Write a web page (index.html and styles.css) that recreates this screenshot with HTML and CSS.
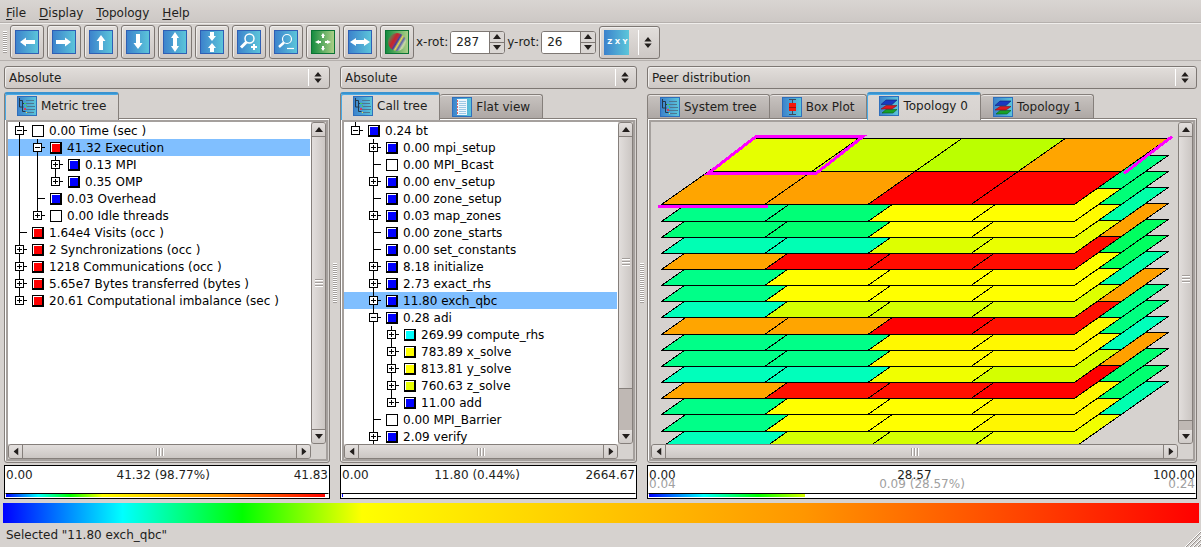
FILE: index.html
```html
<!DOCTYPE html>
<html lang="en">
<head>
	<meta charset="UTF-8">
	<title>Cube</title>
	<link rel="stylesheet" href="styles.css">
</head>
<body>

	<svg class="defs" aria-hidden="true">
		<defs>
			<linearGradient id="blue"><stop offset="0" stop-color="#3c82cc"/><stop offset="1" stop-color="#5cc6da"/></linearGradient>
			<linearGradient id="green"><stop offset="0" stop-color="#128a3e"/><stop offset="1" stop-color="#aed088"/></linearGradient>
			<linearGradient id="ball" x1="0" y1="0.2" x2="1" y2="0.8">
				<stop offset="0" stop-color="#3c9a50"/><stop offset="0.15" stop-color="#7a6a4c"/><stop offset="0.32" stop-color="#c8242c"/>
				<stop offset="0.42" stop-color="#b83040"/><stop offset="0.5" stop-color="#3d3da8"/><stop offset="0.6" stop-color="#e8dc4c"/>
				<stop offset="0.7" stop-color="#5a62a8"/><stop offset="0.82" stop-color="#c8d8a8"/><stop offset="1" stop-color="#90c070"/>
			</linearGradient>
		</defs>
		<symbol id="bg-blue" viewBox="0 0 24 24"><rect x="0.5" y="0.5" width="23" height="23" fill="url(#blue)" stroke="#2f5fb4"/></symbol>
		<symbol id="bg-green" viewBox="0 0 24 24"><rect x="0.5" y="0.5" width="23" height="23" fill="url(#green)" stroke="#0b7434"/></symbol>
		<symbol id="left" viewBox="0 0 24 24"><path d="M5 12l6-4.500v2.500h9v4h-9v2.500z" fill="#fff"/></symbol>
		<symbol id="updown" viewBox="0 0 24 24"><path d="M12 2l4 6h-2v8h2l-4 6-4-6h2V8H8z" fill="#fff"/></symbol>
		<symbol id="tree" viewBox="0 0 20 20">
			<rect x="0.500" y="0.500" width="19" height="19" fill="url(#blue)" stroke="#2f6fbc"/>
			<path d="M2.500 2v9h4M2.500 4.500h3v11h3M5.500 7.500h2" fill="none" stroke="#24384c"/>
			<path d="M9 4.500h8M8 7.500h9M9 10.500h9M8 13.500h10M10 16.500h7" stroke="#4d7791"/>
			<path d="M7 7h2v1H7zM9 9h1v2H9z" fill="#3cd060"/><path d="M7 12h2v2H7z" fill="#d04060"/><path d="M9 16h1v1H9z" fill="#f0e040"/>
		</symbol>
		<symbol id="flat" viewBox="0 0 20 20">
			<rect x="0.500" y="0.500" width="19" height="19" fill="url(#blue)" stroke="#2f6fbc"/>
			<rect x="5" y="2" width="10" height="16" fill="#eef6fc"/>
			<path d="M7 4.500h7M7 6.500h7M7 8.500h7M7 10.500h7M7 12.500h7M7 14.500h7M7 16.500h7" stroke="#9cc8e4"/>
			<path d="M5.500 3v14" stroke="#e06868" stroke-dasharray="2 1"/>
		</symbol>
		<symbol id="box" viewBox="0 0 20 20">
			<rect x="0.500" y="0.500" width="19" height="19" fill="url(#blue)" stroke="#2f6fbc"/>
			<path d="M7 2.500h7M10.500 2v16M7 17.500h7" stroke="#3c4c5c"/>
			<rect x="7" y="6" width="7" height="8" fill="#f41808"/><path d="M7 10.500h7" stroke="#a01008"/>
		</symbol>
		<symbol id="planes" viewBox="0 0 20 20">
			<rect x="0.500" y="0.500" width="19" height="19" fill="url(#blue)" stroke="#2f6fbc"/>
			<path d="M3 17l4-3.500h11L14 17z" fill="#18a028" stroke="#0c6018" stroke-width="0.600"/>
			<path d="M2 13l5-3.500h11L13 13z" fill="#dc1820" stroke="#801018" stroke-width="0.600"/>
			<path d="M2 8.500L7 4h11l-5 4.500z" fill="#1838c0" stroke="#102070" stroke-width="0.600"/>
		</symbol>
		<symbol id="tri-up" viewBox="0 0 8 5"><path d="M0 5l4-5 4 5z"/></symbol>
	</svg>

	<nav class="menubar">
		<a href="#"><u>F</u>ile</a>
		<a href="#"><u>D</u>isplay</a>
		<a href="#"><u>T</u>opology</a>
		<a href="#"><u>H</u>elp</a>
	</nav>

	<div class="toolbar">
		<span class="grip"></span>
		<button class="tool" aria-label="Left"><svg viewBox="0 0 24 24"><use href="#bg-blue"/><use href="#left"/></svg></button>
		<button class="tool" aria-label="Right"><svg viewBox="0 0 24 24"><use href="#bg-blue"/><use href="#left" transform="rotate(180 12 12)"/></svg></button>
		<button class="tool" aria-label="Up"><svg viewBox="0 0 24 24"><use href="#bg-blue"/><use href="#left" transform="rotate(90 12 12)"/></svg></button>
		<button class="tool" aria-label="Down"><svg viewBox="0 0 24 24"><use href="#bg-blue"/><use href="#left" transform="rotate(-90 12 12)"/></svg></button>
		<button class="tool" aria-label="Stretch"><svg viewBox="0 0 24 24"><use href="#bg-blue"/><use href="#updown"/></svg></button>
		<button class="tool" aria-label="Squeeze"><svg viewBox="0 0 24 24"><use href="#bg-blue"/><path d="M10 2h4v4h2l-4 5-4-5h2zM12 13l4 5h-2v4h-4v-4H8z" fill="#fff"/></svg></button>
		<button class="tool" aria-label="Zoom in"><svg viewBox="0 0 24 24"><use href="#bg-blue"/><circle cx="12.500" cy="8.500" r="4.500" fill="none" stroke="#fff" stroke-width="1.500"/><path d="M9.500 12L4 17.500" stroke="#fff" stroke-width="3"/><path d="M17 14v6M14 17h6" stroke="#fff" stroke-width="2"/></svg></button>
		<button class="tool" aria-label="Zoom out"><svg viewBox="0 0 24 24"><use href="#bg-blue"/><circle cx="13" cy="9" r="4.500" fill="none" stroke="#fff" stroke-width="1.200"/><path d="M10 12.500L5 17" stroke="#fff" stroke-width="2.500"/><path d="M13 18.500h7" stroke="#fff" stroke-width="1.200"/></svg></button>
		<button class="tool" aria-label="Reset"><svg viewBox="0 0 24 24"><use href="#bg-green"/><path d="M12 3l2 3h-1v2h-2V6h-1zM12 21l2-3h-1v-2h-2v2h-1zM4 12l4-2v1h2v2H8v1zM20 12l-4-2v1h-2v2h2v1z" fill="#fff"/></svg></button>
		<button class="tool" aria-label="Fit"><svg viewBox="0 0 24 24"><use href="#bg-blue"/><use href="#updown" transform="rotate(90 12 12)"/></svg></button>
		<button class="tool" aria-label="Colors"><svg viewBox="0 0 24 24"><use href="#bg-green"/><circle cx="12" cy="12" r="9" fill="url(#ball)"/></svg></button>
		<label for="xrot">x-rot:</label>
		<span class="spin">
			<input id="xrot" type="text" value="287">
			<span class="steps">
				<button aria-label="Increase"><svg viewBox="0 0 8 5"><use href="#tri-up"/></svg></button>
				<button aria-label="Decrease"><svg class="flip" viewBox="0 0 8 5"><use href="#tri-up"/></svg></button>
			</span>
		</span>
		<label for="yrot">y-rot:</label>
		<span class="spin">
			<input id="yrot" type="text" value="26">
			<span class="steps">
				<button aria-label="Increase"><svg viewBox="0 0 8 5"><use href="#tri-up"/></svg></button>
				<button aria-label="Decrease"><svg class="flip" viewBox="0 0 8 5"><use href="#tri-up"/></svg></button>
			</span>
		</span>
		<div class="combo axis">
			<select aria-label="Axis order"><option>Z X Y</option></select>
			<svg viewBox="0 0 8 12"><path d="M0 5l4-5 4 5zM0 7h8l-4 5z"/></svg>
		</div>
	</div>

	<main class="panels">
		<section class="panel">
			<div class="combo">
				<select aria-label="Metric values"><option>Absolute</option></select>
				<svg viewBox="0 0 8 12"><path d="M0 5l4-5 4 5zM0 7h8l-4 5z"/></svg>
			</div>
			<div class="tabs">
				<button class="tab active"><svg viewBox="0 0 20 20"><use href="#tree"/></svg>Metric tree</button>
			</div>
			<div class="pane">
				<div class="view">
					<ul class="tree">
						<li><div class="row"><button class="toggle open" aria-label="Collapse"></button><i class="mark none"></i>0.00 Time (sec )</div>
							<ul>
								<li><div class="row selected"><button class="toggle open" aria-label="Collapse"></button><i class="mark red"></i>41.32 Execution</div>
									<ul>
										<li><div class="row"><button class="toggle" aria-label="Expand"></button><i class="mark blue"></i>0.13 MPI</div></li>
										<li><div class="row"><button class="toggle" aria-label="Expand"></button><i class="mark blue"></i>0.35 OMP</div></li>
									</ul>
								</li>
								<li><div class="row"><i class="mark blue"></i>0.03 Overhead</div></li>
								<li><div class="row"><button class="toggle" aria-label="Expand"></button><i class="mark none"></i>0.00 Idle threads</div></li>
							</ul>
						</li>
						<li><div class="row"><i class="mark red"></i>1.64e4 Visits (occ )</div></li>
						<li><div class="row"><button class="toggle" aria-label="Expand"></button><i class="mark red"></i>2 Synchronizations (occ )</div></li>
						<li><div class="row"><button class="toggle" aria-label="Expand"></button><i class="mark red"></i>1218 Communications (occ )</div></li>
						<li><div class="row"><button class="toggle" aria-label="Expand"></button><i class="mark red"></i>5.65e7 Bytes transferred (bytes )</div></li>
						<li><div class="row"><button class="toggle" aria-label="Expand"></button><i class="mark red"></i>20.61 Computational imbalance (sec )</div></li>
					</ul>
				</div>
				<div class="vbar">
					<button aria-label="Scroll up"><svg viewBox="0 0 8 5"><use href="#tri-up"/></svg></button>
					<div class="track"><div class="thumb"></div></div>
					<button aria-label="Scroll down"><svg class="flip" viewBox="0 0 8 5"><use href="#tri-up"/></svg></button>
				</div>
				<div class="hbar">
					<button aria-label="Scroll left"><svg class="west" viewBox="0 0 8 5"><use href="#tri-up"/></svg></button>
					<div class="track"><div class="thumb"></div></div>
					<button aria-label="Scroll right"><svg class="east" viewBox="0 0 8 5"><use href="#tri-up"/></svg></button>
				</div>
			</div>
			<div class="values">
				<div class="nums"><span>0.00</span><span>41.32 (98.77%)</span><span>41.83</span></div>
				<div class="level"><div class="rest" style="width: 1%"></div></div>
			</div>
		</section>

		<div class="splitter"></div>

		<section class="panel">
			<div class="combo">
				<select aria-label="Call values"><option>Absolute</option></select>
				<svg viewBox="0 0 8 12"><path d="M0 5l4-5 4 5zM0 7h8l-4 5z"/></svg>
			</div>
			<div class="tabs">
				<button class="tab active"><svg viewBox="0 0 20 20"><use href="#tree"/></svg>Call tree</button>
				<button class="tab"><svg viewBox="0 0 20 20"><use href="#flat"/></svg>Flat view</button>
			</div>
			<div class="pane">
				<div class="view">
					<ul class="tree">
						<li><div class="row"><button class="toggle open" aria-label="Collapse"></button><i class="mark blue"></i>0.24 bt</div>
							<ul>
								<li><div class="row"><button class="toggle" aria-label="Expand"></button><i class="mark blue"></i>0.00 mpi_setup</div></li>
								<li><div class="row"><i class="mark none"></i>0.00 MPI_Bcast</div></li>
								<li><div class="row"><button class="toggle" aria-label="Expand"></button><i class="mark blue"></i>0.00 env_setup</div></li>
								<li><div class="row"><i class="mark blue"></i>0.00 zone_setup</div></li>
								<li><div class="row"><button class="toggle" aria-label="Expand"></button><i class="mark blue"></i>0.03 map_zones</div></li>
								<li><div class="row"><i class="mark blue"></i>0.00 zone_starts</div></li>
								<li><div class="row"><i class="mark blue"></i>0.00 set_constants</div></li>
								<li><div class="row"><button class="toggle" aria-label="Expand"></button><i class="mark blue"></i>8.18 initialize</div></li>
								<li><div class="row"><button class="toggle" aria-label="Expand"></button><i class="mark blue"></i>2.73 exact_rhs</div></li>
								<li><div class="row selected"><button class="toggle" aria-label="Expand"></button><i class="mark blue"></i>11.80 exch_qbc</div></li>
								<li><div class="row"><button class="toggle open" aria-label="Collapse"></button><i class="mark blue"></i>0.28 adi</div>
									<ul>
										<li><div class="row"><button class="toggle" aria-label="Expand"></button><i class="mark cyan"></i>269.99 compute_rhs</div></li>
										<li><div class="row"><button class="toggle" aria-label="Expand"></button><i class="mark yellow"></i>783.89 x_solve</div></li>
										<li><div class="row"><button class="toggle" aria-label="Expand"></button><i class="mark yellow"></i>813.81 y_solve</div></li>
										<li><div class="row"><button class="toggle" aria-label="Expand"></button><i class="mark lime"></i>760.63 z_solve</div></li>
										<li><div class="row"><button class="toggle" aria-label="Expand"></button><i class="mark blue"></i>11.00 add</div></li>
									</ul>
								</li>
								<li><div class="row"><i class="mark none"></i>0.00 MPI_Barrier</div></li>
								<li class="more"><div class="row"><button class="toggle" aria-label="Expand"></button><i class="mark blue"></i>2.09 verify</div></li>
							</ul>
						</li>
					</ul>
				</div>
				<div class="vbar">
					<button aria-label="Scroll up"><svg viewBox="0 0 8 5"><use href="#tri-up"/></svg></button>
					<div class="track"><div class="thumb" style="height: 86%"></div></div>
					<button aria-label="Scroll down"><svg class="flip" viewBox="0 0 8 5"><use href="#tri-up"/></svg></button>
				</div>
				<div class="hbar">
					<button aria-label="Scroll left"><svg class="west" viewBox="0 0 8 5"><use href="#tri-up"/></svg></button>
					<div class="track"><div class="thumb"></div></div>
					<button aria-label="Scroll right"><svg class="east" viewBox="0 0 8 5"><use href="#tri-up"/></svg></button>
				</div>
			</div>
			<div class="values">
				<div class="nums"><span>0.00</span><span>11.80 (0.44%)</span><span>2664.67</span></div>
				<div class="level"><div class="rest" style="width: 99.560%"></div></div>
			</div>
		</section>

		<div class="splitter"></div>

		<section class="panel">
			<div class="combo">
				<select aria-label="System values"><option>Peer distribution</option></select>
				<svg viewBox="0 0 8 12"><path d="M0 5l4-5 4 5zM0 7h8l-4 5z"/></svg>
			</div>
			<div class="tabs">
				<button class="tab"><svg viewBox="0 0 20 20"><use href="#tree"/></svg>System tree</button>
				<button class="tab"><svg viewBox="0 0 20 20"><use href="#box"/></svg>Box Plot</button>
				<button class="tab active"><svg viewBox="0 0 20 20"><use href="#planes"/></svg>Topology 0</button>
				<button class="tab"><svg viewBox="0 0 20 20"><use href="#planes"/></svg>Topology 1</button>
			</div>
			<div class="pane">
				<div class="view plain">
					<svg id="topology" viewBox="0 0 527 322" preserveAspectRatio="xMinYMin slice"></svg>
				</div>
				<div class="vbar">
					<button aria-label="Scroll up"><svg viewBox="0 0 8 5"><use href="#tri-up"/></svg></button>
					<div class="track"><div class="thumb" style="height: 97%"></div></div>
					<button aria-label="Scroll down"><svg class="flip" viewBox="0 0 8 5"><use href="#tri-up"/></svg></button>
				</div>
				<div class="hbar">
					<button aria-label="Scroll left"><svg class="west" viewBox="0 0 8 5"><use href="#tri-up"/></svg></button>
					<div class="track"><div class="thumb"></div></div>
					<button aria-label="Scroll right"><svg class="east" viewBox="0 0 8 5"><use href="#tri-up"/></svg></button>
				</div>
			</div>
			<div class="values">
				<div class="nums"><span>0.00</span><span>28.57</span><span>100.00</span></div>
				<div class="nums ghost"><span>0.04</span><span>0.09 (28.57%)</span><span>0.24</span></div>
				<div class="level"><div class="rest" style="width: 71.430%"></div></div>
			</div>
		</section>
	</main>

	<div class="palette"></div>
	<footer class="status">
		<span>Selected "11.80 exch_qbc"</span>
		<svg class="resize" viewBox="0 0 16 16"><path d="M0 16L16 0M4 16L16 4M8 16l8-8M12 16l4-4" stroke="#fff"/><path d="M1 16L16 1M5 16L16 5M9 16l7-7M13 16l3-3" stroke="#96908c"/></svg>
	</footer>

	<script src="script.js"></script>
</body>
</html>
```

FILE: styles.css
```css
* {
	box-sizing: border-box;
}

body {
	margin: 0;
	height: 100vh;
	display: flex;
	flex-direction: column;
	overflow: hidden;
	background: #d6d2cf;
	color: #221e1c;
	font-family: "DejaVu Sans", sans-serif;
	font-size: 12px;
}

button, input, select {
	font: inherit;
	color: inherit;
	margin: 0;
	padding: 0;
	border: 0;
	border-radius: 0;
	appearance: none;
}

svg {
	display: block;
	flex: none;
	fill: #221e1c;
}

.defs {
	position: absolute;
	width: 0;
	height: 0;
}

.flip { transform: rotate(180deg); }
.west { transform: rotate(-90deg); }
.east { transform: rotate(90deg); }

/* menu and toolbar */
.menubar {
	display: flex;
	gap: 13px;
	height: 23px;
	flex: none;
	padding: 0 6px;
	line-height: 26px;
	background: linear-gradient(#d9d5d2, #cdc8c5);
	border-bottom: 1px solid #b5b0ad;
}

.menubar a {
	color: inherit;
	text-decoration: none;
}

.menubar u {
	text-underline-offset: 2px;
}

.toolbar {
	display: flex;
	align-items: center;
	gap: 3px;
	height: 38px;
	flex: none;
	padding: 0 3px;
	border-top: 1px solid #efedeb;
	border-bottom: 1px solid #b5b0ad;
}

.toolbar label {
	margin: 0 -1px;
}

.grip {
	width: 4px;
	height: 22px;
	background: repeating-linear-gradient(#fff 0 1px, #a39e9b 1px 2px);
}

.tool {
	display: flex;
	align-items: center;
	justify-content: center;
	width: 34px;
	height: 34px;
	border: 1px solid #7d7773;
	border-radius: 3px;
	background: linear-gradient(#e2dedb, #cdc8c5);
	box-shadow: inset 1px 1px #f0eeec;
}

.tool svg {
	width: 24px;
	height: 24px;
}

.spin {
	display: flex;
	width: 55px;
	height: 23px;
	border: 1px solid #7d7773;
	border-radius: 3px;
	background: #fff;
	overflow: hidden;
}

.spin input {
	flex: 1;
	min-width: 0;
	padding-left: 5px;
	background: #fff;
}

.steps {
	display: flex;
	flex-direction: column;
	width: 15px;
	border-left: 1px solid #7d7773;
}

.steps button {
	flex: 1;
	display: flex;
	align-items: center;
	justify-content: center;
	background: #dad6d3;
}

.steps button + button {
	border-top: 1px solid #7d7773;
}

.steps svg {
	width: 8px;
	height: 5px;
}

.combo {
	display: flex;
	align-items: center;
	flex: none;
	height: 23px;
	padding-right: 7px;
	border: 1px solid #7d7773;
	border-radius: 3px;
	background: linear-gradient(#e2dedb, #cdc8c5);
	box-shadow: inset 1px 1px #f0eeec;
}

.combo select {
	flex: 1;
	min-width: 0;
	padding-left: 4px;
	background: none;
	height: 17px;
	border-right: 1px solid #fff;
	margin-right: 5px;
}

.combo svg {
	width: 8px;
	height: 11px;
}

.axis {
	width: 61px;
	height: 33px;
}

.axis select {
	height: 25px;
	padding-left: 7px;
	background: linear-gradient(90deg, #3c82cc, #5cc6da) 4px 0 / 25px 25px no-repeat;
	color: #fff;
	font-size: 7px;
	font-weight: bold;
}

/* three columns */
.panels {
	flex: 1;
	min-height: 0;
	display: grid;
	grid-template-columns: 326fr 10px 297fr 10px 550fr;
	padding: 5px 4px 4px;
}

.panel {
	display: flex;
	flex-direction: column;
	min-width: 0;
	min-height: 0;
}

.splitter {
	align-self: center;
	justify-self: center;
	width: 4px;
	height: 40px;
	background: repeating-linear-gradient(#fff 0 1px, #a39e9b 1px 2px);
}

.tabs {
	display: flex;
	align-items: flex-end;
	flex: none;
	height: 29px;
}

.tab {
	display: flex;
	align-items: center;
	gap: 4px;
	height: 24px;
	padding: 0 12px;
	border: 1px solid #857f7b;
	border-width: 1px 1px 0 0;
	border-radius: 3px 3px 0 0;
	background: linear-gradient(#c8c3c0, #aea8a5);
	box-shadow: inset 0 1px #e8e5e3;
	white-space: nowrap;
}

.tab:first-child {
	border-left-width: 1px;
}

.tab.active {
	position: relative;
	height: 28px;
	margin-bottom: -2px;
	padding-bottom: 2px;
	border-top: 2px solid #3a93cf;
	background: linear-gradient(#dcd8d5, #d6d2cf);
	box-shadow: inset 1px 1px #48aae6;
}

.tab svg {
	width: 20px;
	height: 20px;
}

.pane {
	flex: 1;
	min-height: 0;
	display: grid;
	grid-template: 1fr 15px / 1fr 15px;
	padding: 3px;
	border: 1px solid #857f7b;
	border-radius: 0 0 3px 3px;
	box-shadow: inset 1px 1px #fff, inset 0 0 0 1px #d6d2cf, inset 0 0 0 3px #a5a09d;
	margin-bottom: 2px;
}

.view {
	overflow: hidden;
	background: #fff;
	padding-right: 1px;
}

.view.plain {
	background: none;
	padding: 0;
}

#topology {
	width: 100%;
	height: 100%;
}

/* trees */
.tree, .tree ul {
	list-style: none;
	margin: 0;
	padding: 0;
	--depth: 0px;
}

.tree ul { --depth: 18px; }
.tree ul ul { --depth: 36px; }

.tree li {
	position: relative;
	color: #000;
}

/* vertical branch line */
.tree li::before {
	content: "";
	position: absolute;
	z-index: 1;
	top: 0;
	bottom: 0;
	left: calc(11px + var(--depth));
	width: 1px;
	background: #000;
}

.tree li:last-child::before {
	bottom: auto;
	height: 9px;
}

.tree li.more::before {
	height: 17px;
}

.row {
	position: relative;
	display: flex;
	align-items: center;
	gap: 5px;
	height: 17px;
	padding-left: calc(24px + var(--depth));
	white-space: nowrap;
}

/* short branch to the mark */
.row::before {
	content: "";
	position: absolute;
	left: calc(11px + var(--depth));
	top: 8px;
	width: 8px;
	height: 1px;
	background: #000;
}

.row.selected {
	background: #80bfff;
}

.tree .toggle {
	position: absolute;
	z-index: 2;
	left: calc(7px + var(--depth));
	top: 4px;
	width: 9px;
	height: 9px;
	border: 1px solid #000;
	background: linear-gradient(#000, #000) center / 5px 1px no-repeat, linear-gradient(#000, #000) center / 1px 5px no-repeat, #fff;
}

.tree .toggle.open {
	background: linear-gradient(#000, #000) center / 5px 1px no-repeat, #fff;
}

.mark {
	width: 12px;
	height: 12px;
	border: 1px solid #000;
	border-width: 1px 2px 2px 1px;
	box-shadow: inset 1px 1px #fff;
}

.mark.none { background: #fff; border-width: 1px; }
.mark.red { background: #f00; }
.mark.blue { background: #00f; }
.mark.cyan { background: #0ff; }
.mark.yellow { background: #ff0; }
.mark.lime { background: #e6ff00; }

/* scrollbars */
.vbar, .hbar {
	display: flex;
	border: 1px solid #857f7b;
	border-radius: 3px;
	background: #bfb8b4;
	overflow: hidden;
}

.vbar {
	flex-direction: column;
}

.vbar button, .hbar button {
	display: flex;
	align-items: center;
	justify-content: center;
	flex: none;
	width: 13px;
	height: 13px;
	background: linear-gradient(#e4e0de, #d0cbc8);
}

.vbar svg, .hbar svg {
	width: 8px;
	height: 5px;
}

.track {
	flex: 1;
	min-height: 0;
}

.thumb {
	display: flex;
	align-items: center;
	justify-content: center;
	height: 100%;
	border: 1px solid #857f7b;
}

.vbar .thumb {
	border-width: 1px 0;
	background: linear-gradient(90deg, #e2dedc, #cbc6c3);
}

.hbar .thumb {
	border-width: 0 1px;
	background: linear-gradient(#e2dedc, #cbc6c3);
}

.thumb::after {
	content: "";
	width: 8px;
	height: 8px;
	background: repeating-linear-gradient(90deg, #a39e9b 0 1px, #fff 1px 2px, transparent 2px 3px);
}

.vbar .thumb::after {
	background: repeating-linear-gradient(#a39e9b 0 1px, #fff 1px 2px, transparent 2px 3px);
}

/* value boxes */
.values {
	display: flex;
	flex-direction: column;
	flex: none;
	height: 34px;
	border: 1px solid #000;
	background: #fff;
}

.nums {
	display: flex;
	justify-content: space-between;
	height: 9px;
	padding: 0 1px;
	line-height: 18px;
}

.ghost {
	color: #a0a0a0;
}

.level {
	display: flex;
	justify-content: flex-end;
	height: 5px;
	margin-top: auto;
	border: 1px solid #fff;
	border-top-color: #000;
}

.rest {
	background: #fff;
}

.level, .palette {
	background-image: linear-gradient(90deg, #00f, #0ff 10%, #0f0 20%, #ff0 30%, #ff9600 67%, #f00);
}

.palette {
	flex: none;
	height: 20px;
	margin: 0 2px 0 3px;
}

.status {
	display: flex;
	align-items: center;
	justify-content: space-between;
	flex: none;
	height: 24px;
	padding-left: 6px;
}

.resize {
	align-self: flex-end;
	width: 16px;
	height: 16px;
}
```

FILE: script.js
```js
(function () {
	var svg = document.getElementById('topology');

	// front row of each plane, then the last cell of its back row
	var planes = [
		['#ffa500', '#ffa000', '#ff0000', '#ff0400', '#ffa500'],
		['#00ff88', '#00ff77', '#ffff00', '#ffff00', '#00ff80'],
		['#00ff77', '#00ff70', '#ffff00', '#fffa00', '#00ff77'],
		['#00ffb4', '#00ffb4', '#ddff00', '#eaff00', '#00ffa8'],
		['#ffa500', '#ff0400', '#ff0c00', '#ff0c00', '#ffa000'],
		['#00ff88', '#ffff00', '#ffff00', '#ffff00', '#00ff60'],
		['#00ff88', '#ffff00', '#ffff00', '#ffff00', '#00ff60'],
		['#00ffbb', '#d4ff00', '#d4ff00', '#ddff00', '#00ffa8'],
		['#ffa500', '#ffa500', '#ff0000', '#ff1000', '#ffa000'],
		['#00ff88', '#00ff88', '#fff800', '#fff800', '#00ff88'],
		['#00ff88', '#00ff88', '#fff800', '#fff800', '#00ff80'],
		['#00ffbb', '#00ffbb', '#f0ff00', '#d4ff00', '#00ffbb'],
		['#ffa500', '#ff1000', '#ff1000', '#ff0000', '#ffa000'],
		['#00ff88', '#ffff00', '#ffff00', '#fff600', '#00ff70'],
		['#00ff88', '#ffff00', '#ffff00', '#fff600', '#00ff70'],
		['#00ffbb', '#d4ff00', '#d4ff00', '#f0ff00', '#00ffb0']
	];
	var back = ['#e6ff00', '#ccff00', '#bbff00'];
	var left = 10.5, front = 82.42, cell = 103.2, step = 16.15, rise = 33, shift = 47;

	function add(name, attrs) {
		var el = document.createElementNS('http://www.w3.org/2000/svg', name);
		for (var key in attrs) {
			el.setAttribute(key, attrs[key]);
		}
		svg.appendChild(el);
	}

	function drawCell(k, col, row, color) {
		var x = left + col * cell + row * shift;
		var y = Math.round(front + k * step) - row * rise + 0.5;
		add('polygon', {
			points: [x, y, x + cell, y, x + cell + shift, y - rise, x + shift, y - rise].join(' '),
			fill: color,
			stroke: '#000',
			'shape-rendering': 'crispEdges'
		});
	}

	for (var k = planes.length - 1; k >= 0; k--) {
		for (var col = 0; col < 4; col++) {
			drawCell(k, col, 1, col === 3 ? planes[k][4] : back[col]);
			drawCell(k, col, 0, planes[k][col]);
		}
	}

	// selected cell
	add('path', {
		d: 'M105 14.5H212L165 51.5H57zM7 84.500H117M473 51.500L521 14.500',
		fill: 'none',
		stroke: '#f0f',
		'stroke-width': 3,
		'shape-rendering': 'crispEdges'
	});
})();
```
